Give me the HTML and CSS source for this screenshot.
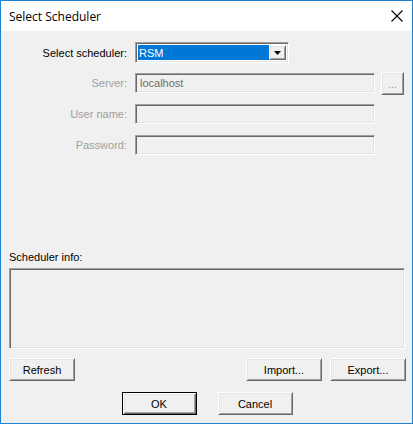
FILE: index.html
```html
<!DOCTYPE html>
<html>
<head>
<meta charset="utf-8">
<link rel="stylesheet" href="styles.css">
</head>
<body>
<div class="window">
  <div class="titlebar">
    <span class="title">Select Scheduler</span>
    <svg class="close" width="12" height="12" viewBox="0 0 12 12"><path d="M0.5 0.5 L11.5 11.5 M11.5 0.5 L0.5 11.5" stroke="#000" stroke-width="1.1" fill="none"/></svg>
  </div>
  <div class="content">
    <div class="form">
      <div class="row r1">
        <label class="lbl">Select scheduler:</label>
        <div class="combo sunken">
          <div class="combo-value"><span>RSM</span></div>
          <div class="combo-btn raised"><svg width="7" height="4" viewBox="0 0 7 4"><path d="M0 0 H7 L3.5 4 Z" fill="#000"/></svg></div>
        </div>
      </div>
      <div class="row r2">
        <label class="lbl dis">Server:</label>
        <div class="field sunken">localhost</div>
        <div class="btn raised dots">...</div>
      </div>
      <div class="row r3">
        <label class="lbl dis">User name:</label>
        <div class="field sunken"></div>
      </div>
      <div class="row r4">
        <label class="lbl dis">Password:</label>
        <div class="field sunken"></div>
      </div>
    </div>
    <div class="info-label">Scheduler info:</div>
    <div class="info sunken"></div>
    <div class="actions">
      <div class="btn raised w66">Refresh</div>
      <div class="right">
        <div class="btn raised w76">Import...</div>
        <div class="btn raised w76">Export...</div>
      </div>
    </div>
    <div class="footer">
      <div class="btn raised w75 default">OK</div>
      <div class="btn raised w75">Cancel</div>
    </div>
  </div>
</div>
</body>
</html>
```
FILE: styles.css
```css
html, body { margin: 0; padding: 0; background: #fff; }
body { font-family: "Liberation Sans", Arial, sans-serif; font-size: 11px; color: #000; }
.window {
  width: 413px; height: 424px; box-sizing: border-box;
  border: 1px solid #1883d7; background: #f0f0f0;
  display: flex; flex-direction: column;
}
.titlebar {
  height: 30px; background: #fff; display: flex; align-items: center;
  justify-content: space-between; padding: 0 9px 0 8px; flex: none;
}
.title { font-family: "Open Sans", "Noto Sans", sans-serif; font-size: 12px; color: #000; }
.close { display: block; }
.content { padding: 11px 7px 0 8px; flex: 1; }
.sunken {
  box-sizing: border-box; border: 1px solid; border-color: #a0a0a0 #fff #fff #a0a0a0;
  box-shadow: inset 1px 1px #696969, inset -1px -1px #e3e3e3;
}
.raised {
  box-sizing: border-box; border: 1px solid; border-color: #fff #696969 #696969 #fff;
  box-shadow: inset 1px 1px #e3e3e3, inset -1px -1px #a0a0a0; background: #f0f0f0;
}
.row { display: flex; align-items: center; }
.lbl { width: 118px; text-align: right; margin-right: 8px; }
.dis { color: #a0a0a0; }
.r1 { height: 21px; margin-bottom: 9px; }
.r2 { height: 22px; margin-bottom: 10px; }
.r3 { height: 20px; margin-bottom: 11px; }
.r4 { height: 20px; }
.combo { width: 154px; height: 21px; display: flex; padding: 2px; background: #fff; }
.combo-value { flex: 1; background: #0078d7; color: #fff; display: flex; align-items: center; padding-left: 1px; }
.combo-btn { width: 17px; display: flex; align-items: center; justify-content: center; }
.field { width: 240px; height: 20px; display: flex; align-items: center; padding-left: 4px; color: #6d6d6d; background: #f0f0f0; }
.btn { height: 23px; display: flex; align-items: center; justify-content: center; }
.dots { width: 23px; margin-left: 6px; color: #a0a0a0; padding-top: 2px; }
.info-label { margin-top: 96px; height: 13px; line-height: 13px; }
.info { margin-top: 4px; height: 81px; width: 396px; background: #f0f0f0; }
.actions { margin-top: 9px; display: flex; justify-content: space-between; width: 397px; }
.right { display: flex; gap: 8px; }
.w66 { width: 66px; }
.w76 { width: 76px; }
.footer { margin-top: 11px; display: flex; justify-content: center; gap: 21px; }
.w75 { width: 75px; }
.default { border-color: #000; box-shadow: inset 1px 1px #fff, inset -1px -1px #696969, inset 2px 2px #e3e3e3, inset -2px -2px #a0a0a0; }
```
